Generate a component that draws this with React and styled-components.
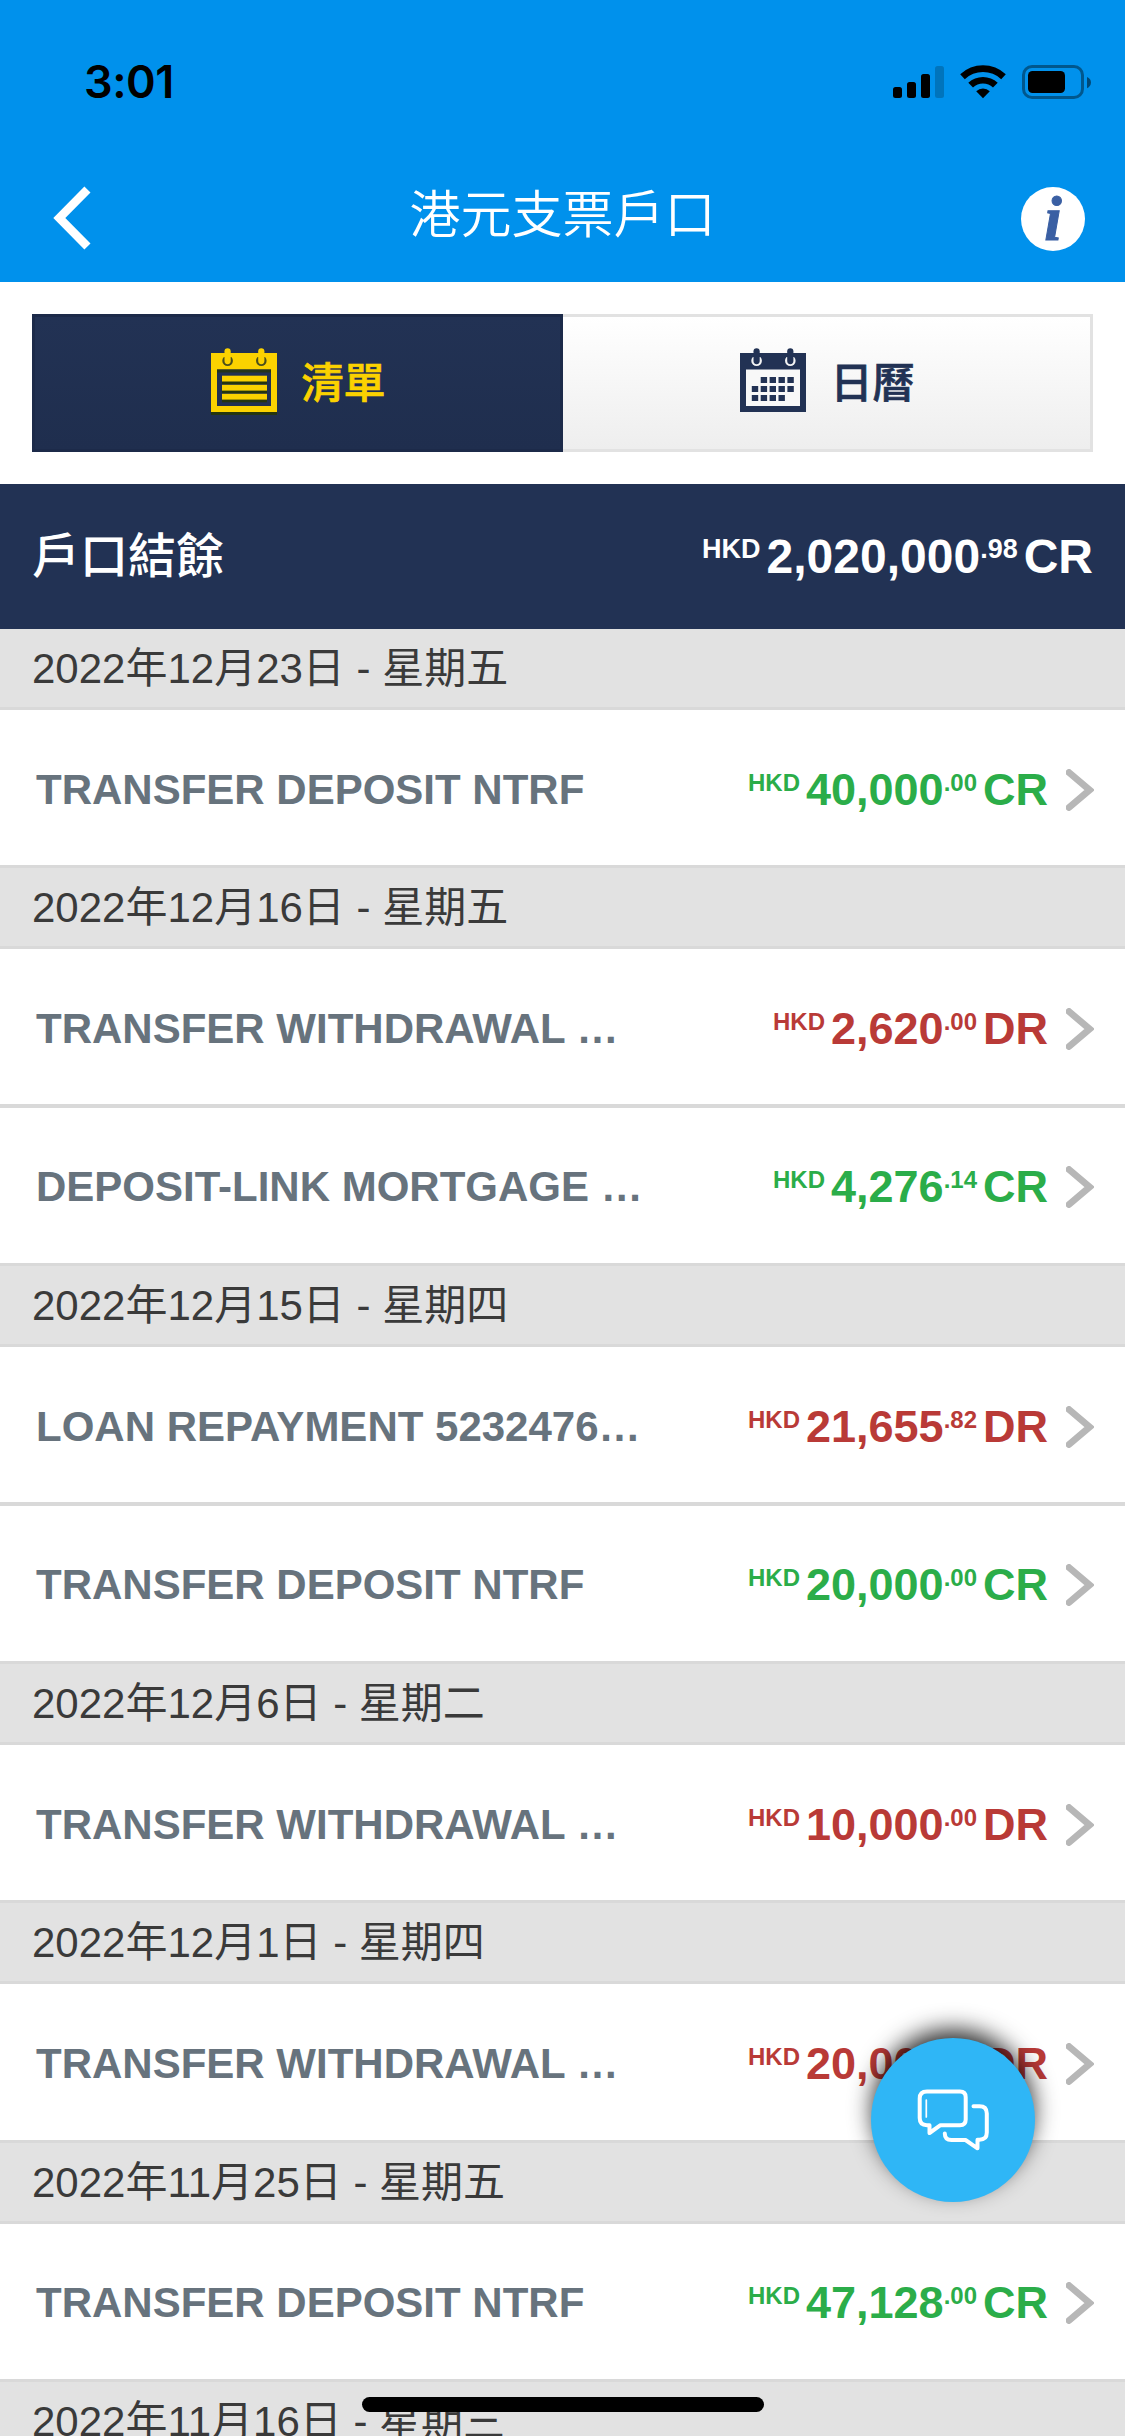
import React from 'react';
import styled, {createGlobalStyle} from 'styled-components';

const transactions = [
    {date: '2022年12月23日 - 星期五', items: [
        {desc: 'TRANSFER DEPOSIT NTRF', amount: '40,000', cents: '.00', type: 'CR'},
    ]},
    {date: '2022年12月16日 - 星期五', items: [
        {desc: 'TRANSFER WITHDRAWAL …', amount: '2,620', cents: '.00', type: 'DR'},
        {desc: 'DEPOSIT-LINK MORTGAGE …', amount: '4,276', cents: '.14', type: 'CR'},
    ]},
    {date: '2022年12月15日 - 星期四', items: [
        {desc: 'LOAN REPAYMENT 5232476…', amount: '21,655', cents: '.82', type: 'DR'},
        {desc: 'TRANSFER DEPOSIT NTRF', amount: '20,000', cents: '.00', type: 'CR'},
    ]},
    {date: '2022年12月6日 - 星期二', items: [
        {desc: 'TRANSFER WITHDRAWAL …', amount: '10,000', cents: '.00', type: 'DR'},
    ]},
    {date: '2022年12月1日 - 星期四', items: [
        {desc: 'TRANSFER WITHDRAWAL …', amount: '20,000', cents: '.00', type: 'DR'},
    ]},
    {date: '2022年11月25日 - 星期五', items: [
        {desc: 'TRANSFER DEPOSIT NTRF', amount: '47,128', cents: '.00', type: 'CR'},
    ]},
    {date: '2022年11月16日 - 星期三', items: []},
];

const calendarDots = [
    [1, 0], [2, 0], [3, 0], [4, 0],
    [0, 1], [1, 1], [2, 1], [3, 1], [4, 1],
    [0, 2], [1, 2], [2, 2], [3, 2],
];

function StatusIcons()
{
    return (
        <svg width="200" height="36" viewBox="892 64 200 36">
            <rect x="893" y="87" width="9" height="11" rx="2.5"/>
            <rect x="907" y="82" width="9" height="16" rx="2.5"/>
            <rect x="921" y="74" width="9" height="24" rx="2.5"/>
            <rect x="935" y="66" width="9" height="32" rx="2.5" opacity="0.2"/>
            <path d="M960.2 74.3 A33 33 0 0 1 1005.8 74.3 L1001.2 79.2 A26.3 26.3 0 0 0 964.8 79.2 Z"/>
            <path d="M968.3 82.8 A21.3 21.3 0 0 1 997.7 82.8 L993 87.6 A14.5 14.5 0 0 0 973 87.6 Z"/>
            <path d="M976.2 91.2 A10 10 0 0 1 989.8 91.2 L983 98.2 Z"/>
            <rect x="1023.5" y="66.5" width="59" height="31" rx="8.5" fill="none" stroke="#000" strokeWidth="3" opacity="0.4"/>
            <rect x="1028" y="71" width="37" height="22" rx="4.5"/>
            <path d="M1087 77 C1092.3 79 1092.3 86 1087 88.2 Z" opacity="0.5"/>
        </svg>
    );
}

function CalendarIcon({active})
{
    const main = active ? '#fbd200' : '#223254';
    const inner = active ? '#203052' : '#f8f8f8';
    const ring = active ? '#4a4f1c' : '#f4f4f4';
    return (
        <svg width="66" height="68" viewBox="0 -1 66 68">
            {active && <rect x="0" y="7" width="66" height="59" fill="#25350f"/>}
            <rect x="0" y="4" width="66" height="59" fill={main}/>
            <rect x="6" y="20.5" width="54" height="36.5" fill={inner}/>
            {active && <rect x="6" y="20.5" width="54" height="3" fill="#24331a"/>}
            {[16.6, 50.3].map((x) => (
                <g key={x}>
                    <circle cx={x} cy="11.8" r="5.3" fill={ring}/>
                    <rect x={x - 6} y="4" width="12" height="4" fill={main}/>
                    <rect x={x - 3.1} y="-0.8" width="6.2" height="16" rx="3.1" fill={main}/>
                </g>
            ))}
            {active && [26.7, 35.8, 44.8].map((y) => (
                <g key={y}>
                    <rect x="11" y={y + 3} width="45" height="5.5" fill="#25350f"/>
                    <rect x="11" y={y} width="45" height="5.8" fill={main}/>
                </g>
            ))}
            {!active && calendarDots.map(([col, row]) => (
                <rect key={`${col}-${row}`} x={11.8 + col * 8.9} y={28 + row * 9} width="6.4" height="6" fill={main}/>
            ))}
        </svg>
    );
}

function Money({amount, cents, type, large})
{
    return (
        <Amount $large={large} $type={type}>
            <Small $large={large}>HKD</Small>
            <Figure>{amount}</Figure>
            <Small $large={large}>{cents}</Small>
            <Figure>{type}</Figure>
        </Amount>
    );
}

function App()
{
    return (
        <>
            <GlobalStyle/>
            <Screen>
                <Header>
                    <StatusBar>
                        <time>3:01</time>
                        <StatusIcons/>
                    </StatusBar>
                    <TitleBar>
                        <BackButton aria-label="back">
                            <svg width="38" height="64" viewBox="0 0 38 64">
                                <path d="M31.4 0.5 L37.5 6.5 L12.3 32 L37.5 57.5 L31.4 63.5 L0.3 32 Z" fill="#fff"/>
                            </svg>
                        </BackButton>
                        <h1>港元支票戶口</h1>
                        <InfoButton aria-label="info">i</InfoButton>
                    </TitleBar>
                </Header>
                <Tabs>
                    <Tab $active>
                        <CalendarIcon active/>
                        <span>清單</span>
                    </Tab>
                    <Tab>
                        <CalendarIcon/>
                        <span>日曆</span>
                    </Tab>
                </Tabs>
                <Balance>
                    <h2>戶口結餘</h2>
                    <Money amount="2,020,000" cents=".98" type="CR" large/>
                </Balance>
                {transactions.map((group) => (
                    <Group key={group.date}>
                        <DateHeading>{group.date}</DateHeading>
                        {group.items.map((item) => (
                            <Row key={item.desc}>
                                <p>{item.desc}</p>
                                <Money amount={item.amount} cents={item.cents} type={item.type}/>
                                <svg width="28" height="42" viewBox="0 0 28 42">
                                    <path d="M3 3.5 L23.5 21 L3 38.5" fill="none" stroke="#b7b7b7" strokeWidth="6.8" strokeLinecap="round"/>
                                </svg>
                            </Row>
                        ))}
                    </Group>
                ))}
                <ChatButton aria-label="chat">
                    <svg width="164" height="164" viewBox="-0.5 0 164 164" fill="none" stroke="#fff" strokeWidth="4" strokeLinecap="round" strokeLinejoin="round">
                        <path d="M55.5 53.5 H88.5 Q94.2 53.5 94.2 59.2 V81.5 Q94.2 87.2 88.5 87.2 H69 L58 95 V87.2 H55.5 Q48.2 87.2 48.2 80 V60.5 Q48.2 53.5 55.5 53.5 Z"/>
                        <path d="M102 68.3 H108 Q115.3 68.3 115.3 75.5 V94.5 Q115.3 101.7 108 101.7 H106 V110.3 L94 102 H80 Q73.3 102 73.3 95.5"/>
                        <path d="M54.8 62 V79" strokeWidth="1.7"/>
                    </svg>
                </ChatButton>
                <HomeIndicator/>
            </Screen>
        </>
    );
}

const GlobalStyle = createGlobalStyle`
    *
    {
        box-sizing: border-box;
    }
    body
    {
        margin: 0;
        background-color: #fff;
        font-family: "Liberation Sans", "Noto Sans CJK TC", sans-serif;
    }
    h1, h2, p
    {
        margin: 0;
    }
    button
    {
        padding: 0;
        border: none;
        background: none;
        font-family: inherit;
    }
    svg
    {
        display: block;
        flex-shrink: 0;
    }
`;

const Screen = styled.div`
    position: relative;
    width: 1125px;
    height: 2436px;
    overflow: hidden;
    background-color: #fff;
`;

const Header = styled.header`
    height: 282px;
    background-color: #0091ec;
`;

const StatusBar = styled.div`
    display: flex;
    justify-content: space-between;
    align-items: flex-start;
    height: 154px;
    padding: 64px 33px 0 84px;

    time
    {
        font-family: Inter, sans-serif;
        font-size: 45px;
        font-weight: 600;
        line-height: 36px;
        letter-spacing: -0.5px;
        color: #000;
    }
`;

const TitleBar = styled.div`
    display: grid;
    grid-template-columns: 64px 1fr 64px;
    align-items: center;
    height: 128px;
    padding: 0 40px 0 53px;

    h1
    {
        padding: 0 13px 15px 0;
        text-align: center;
        font-family: "Noto Sans CJK TC", sans-serif;
        font-size: 51px;
        font-weight: 350;
        line-height: 64px;
        color: #fff;
    }
`;

const BackButton = styled.button`
    display: flex;
    width: 64px;
`;

const InfoButton = styled.button`
    width: 64px;
    height: 64px;
    margin-top: 2px;
    border-radius: 50%;
    background-color: #fff;
    color: #3a5fa3;
    font-family: "Liberation Serif", serif;
    font-size: 63px;
    font-style: italic;
    font-weight: bold;
    line-height: 64px;
    -webkit-text-stroke: 1px #3a5fa3;
`;

const Tabs = styled.nav`
    display: grid;
    grid-template-columns: 531px 1fr;
    padding: 32px;
`;

const Tab = styled.button`
    display: flex;
    align-items: center;
    justify-content: center;
    gap: 24px;
    height: 138px;
    padding-left: 2px;
    border: 3px solid ${({$active}) => $active ? '#1c2a49' : '#e2e2e2'};
    border-left-width: ${({$active}) => $active ? '3px' : '0'};
    background: ${({$active}) => $active ? 'linear-gradient(#223254, #1f2e4e)' : 'linear-gradient(#fff, #eee)'};
    color: ${({$active}) => $active ? '#fbd200' : '#223254'};
    font-size: 42px;
    font-weight: 500;
    line-height: 60px;
    -webkit-text-stroke: 0.7px currentColor;

    svg
    {
        margin-bottom: 2px;
    }

    span
    {
        padding-top: 2px;
    }
`;

const Balance = styled.section`
    display: flex;
    align-items: center;
    justify-content: space-between;
    height: 145px;
    padding: 0 32px;
    background-color: #223254;
    color: #fff;

    h2
    {
        font-size: 48px;
        font-weight: 500;
        line-height: 64px;
    }
`;

const Amount = styled.div`
    display: flex;
    align-items: baseline;
    font-size: ${({$large}) => $large ? '48px' : '45px'};
    font-weight: bold;
    line-height: 56px;
    color: ${({$large, $type}) => $large ? '#fff' : $type === 'CR' ? '#2bad49' : '#b93a37'};
`;

const Figure = styled.span`
    white-space: nowrap;
`;

const Small = styled.sup`
    position: relative;
    top: ${({$large}) => $large ? '-15px' : '-14px'};
    margin-right: 6px;
    font-size: ${({$large}) => $large ? '27px' : '24px'};
    line-height: 1;
    vertical-align: baseline;
`;

const Group = styled.section`
    & + &
    {
        border-top: 3px solid #d9d9d9;
    }
`;

const DateHeading = styled.h2`
    height: 81px;
    padding-left: 32px;
    border-bottom: 3px solid #d9d9d9;
    background-color: #e2e2e2;
    color: #3a3a3a;
    font-size: 42px;
    font-weight: normal;
    line-height: 80px;
`;

const Row = styled.div`
    display: flex;
    align-items: center;
    height: 155.2px;
    padding: 4px 31px 0 36px;
    background-color: #fff;

    & + &
    {
        height: 158.8px;
        padding-top: 2px;
        border-top: 4px solid #d9d9d9;
    }

    p
    {
        flex: 1;
        font-size: 42px;
        font-weight: bold;
        line-height: 56px;
        color: #67737d;
        white-space: nowrap;
    }

    svg
    {
        margin-left: 18px;
    }
`;

const ChatButton = styled.button`
    position: absolute;
    top: 2038px;
    left: 871px;
    width: 164px;
    height: 164px;
    border-radius: 50%;
    background-color: #2fb6f6;
    box-shadow: 0 -10px 23px -2px rgba(0, 0, 0, 0.85);
`;

const HomeIndicator = styled.div`
    position: absolute;
    bottom: 24px;
    left: 362px;
    width: 402px;
    height: 15px;
    border-radius: 8px;
    background-color: #000;
`;

export default App;
